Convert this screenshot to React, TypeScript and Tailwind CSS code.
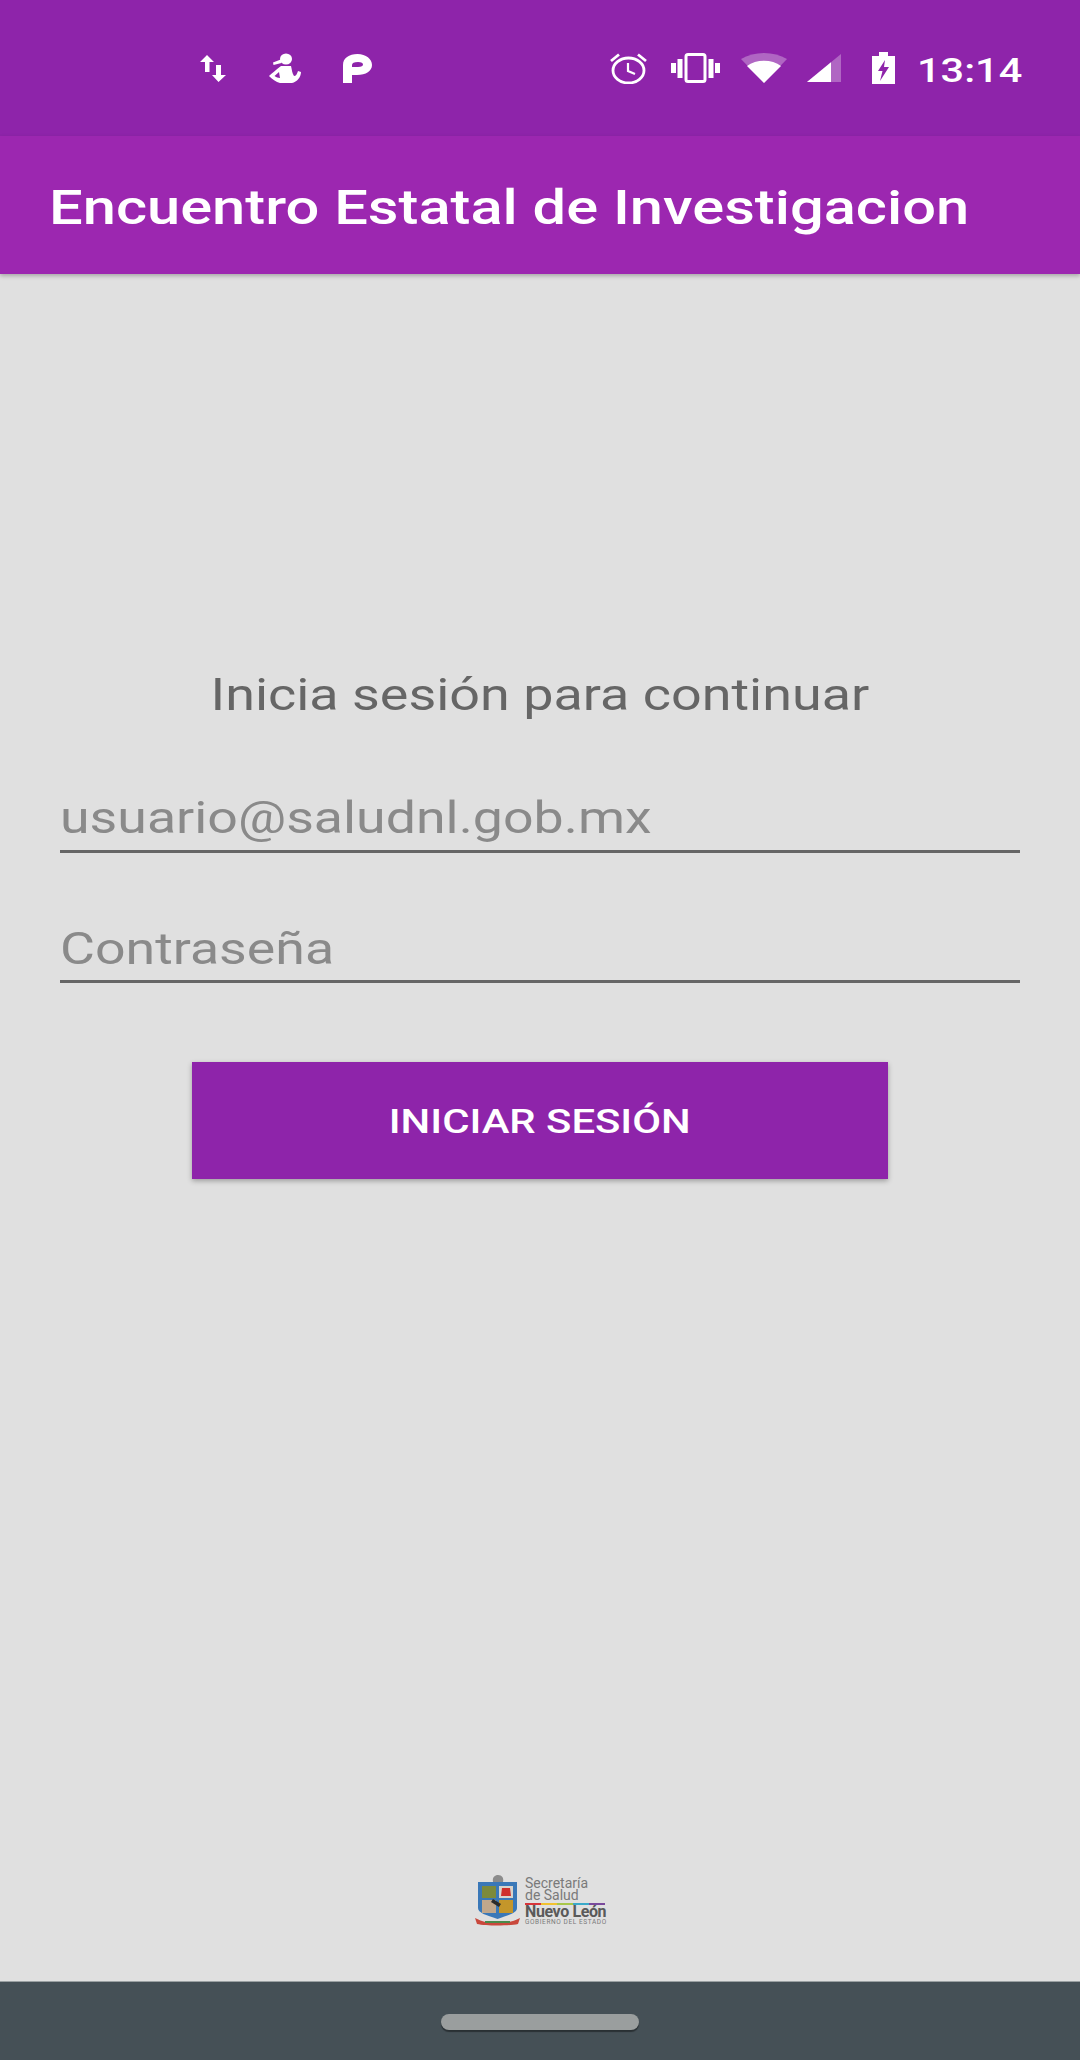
const font = "font-['Roboto',sans-serif]";

function ArrowsIcon() {
  return (
    <svg width="26" height="27" viewBox="0 0 26 27">
      <path d="M7 0L14 7H9.5V17H5V7H0Z M16 10H21V20H26L18.5 27L12 20H16Z" fill="#fff" />
    </svg>
  );
}

function RunnerIcon() {
  return (
    <svg width="33" height="30" viewBox="0 0 33 30">
      <ellipse cx="18" cy="6" rx="6" ry="5.5" fill="#fff" />
      <path d="M14 6L5 9.5L5.5 12L13.5 10Z" fill="#fff" />
      <path
        fillRule="evenodd"
        d="M13 13H23C24 17 24 20 26 23C28 23 29 21 30 18L33 19C33 24 29 29 24 30H12C8 29 4 26 1 23C4 20 8 17 13 13ZM11 19L6.5 23C8 24 10 25 12 25Z"
        fill="#fff"
      />
    </svg>
  );
}

function ParkIcon() {
  return (
    <svg width="29" height="29" viewBox="0 0 29 29">
      <path
        fillRule="evenodd"
        d="M0 29V11C0 4 6 0 14.5 0C23 0 29 5 29 11C29 17 23 21 14 21H9V29ZM9 13H15C18.5 13 20 12 20 10.5C20 9 18.5 8 15 8C11 8 9 9 9 11Z"
        fill="#fff"
      />
    </svg>
  );
}

function AlarmIcon() {
  return (
    <svg width="37" height="31" viewBox="0 0 37 31" fill="none" stroke="#fff">
      <ellipse cx="18.5" cy="17.5" rx="15.5" ry="12.5" strokeWidth="2.8" />
      <path d="M18 10V18L25 21" strokeWidth="2.2" />
      <path d="M1 8L9 1.5M36 8L28 1.5" strokeWidth="2.8" />
    </svg>
  );
}

function VibrateIcon() {
  return (
    <svg width="49" height="30" viewBox="0 0 49 30" fill="#fff">
      <rect x="0" y="10" width="5" height="10" />
      <rect x="6.5" y="6" width="5" height="19" />
      <rect x="37.5" y="6" width="5" height="19" />
      <rect x="44" y="10" width="5" height="10" />
      <rect x="15" y="1.5" width="19" height="27" rx="2" fill="none" stroke="#fff" strokeWidth="3" />
    </svg>
  );
}

function WifiIcon() {
  return (
    <svg width="46" height="30" viewBox="0 0 46 30">
      <path d="M0 6C13 -2 33 -2 46 6L23 30Z" fill="#fff" fillOpacity="0.3" />
      <path d="M6 13C15 6 31 6 40 13L23 30Z" fill="#fff" />
    </svg>
  );
}

function SignalIcon() {
  return (
    <svg width="34" height="28" viewBox="0 0 34 28">
      <path d="M34 0V28H0Z" fill="#fff" fillOpacity="0.3" />
      <path d="M24 8.2V28H0Z" fill="#fff" />
    </svg>
  );
}

function BatteryIcon() {
  return (
    <svg width="23" height="32" viewBox="0 0 23 32">
      <path fillRule="evenodd" d="M7 0H16V4H23V32H0V4H7ZM13 8L6 19H10.5L8 29L17 15H12Z" fill="#fff" />
    </svg>
  );
}

function NuevoLeonLogo() {
  return (
    <div className="flex items-center gap-[5px]">
      <svg width="45" height="51" viewBox="0 0 45 51">
        <path d="M18 7C17 2 20 0 23 0C27 0 29 3 28 7Z" fill="#8c8c8c" />
        <path d="M3 7H42V33C42 38 34 40 22.5 44C11 40 3 38 3 33Z" fill="#3a78b8" />
        <rect x="7" y="11" width="14" height="12" fill="#7c8a3c" />
        <rect x="24" y="11" width="14" height="12" fill="#d8d4cc" />
        <path d="M27 13L35 13L36 21H26Z" fill="#cf2f2a" />
        <rect x="7" y="25" width="14" height="13" fill="#c0a78c" />
        <rect x="24" y="25" width="14" height="13" fill="#c4962a" />
        <path d="M18 24L26 29L24 32L16 27Z" fill="#2b2b2b" />
        <path d="M0 43C8 47 12 48 22 48C32 48 37 47 45 43L43 49C34 51 11 51 2 49Z" fill="#c9483c" />
        <path d="M10 46H35V48H10Z" fill="#4a8a4a" />
      </svg>
      <div className={`flex w-[80px] flex-col ${font} text-[#7a7a7a]`}>
        <span className="text-[14px] leading-[12px]">Secretaría</span>
        <span className="text-[14px] leading-[13px]">de Salud</span>
        <div className="mt-[1px] flex h-[2px] w-[80px]">
          <div className="flex-1 bg-[#d8343a]" />
          <div className="flex-1 bg-[#f2c230]" />
          <div className="flex-1 bg-[#a8c74a]" />
          <div className="flex-1 bg-[#3aa9c9]" />
          <div className="flex-1 bg-[#7a4a9c]" />
        </div>
        <span className="whitespace-nowrap text-[16px] font-bold leading-[14px] tracking-[-0.4px] text-[#5a5a5a]">
          Nuevo León
        </span>
        <span className="whitespace-nowrap text-[6.5px] leading-[6px] tracking-[0.6px]">GOBIERNO DEL ESTADO</span>
      </div>
    </div>
  );
}

export default function App() {
  return (
    <div className={`flex h-[2060px] w-[1080px] flex-col bg-[#e0e0e0] ${font}`}>
      <div className="flex h-[136px] shrink-0 items-center bg-[#8e24aa] pl-[200px] pr-[58px]">
        <ArrowsIcon />
        <div className="ml-[42px]"><RunnerIcon /></div>
        <div className="ml-[42px]"><ParkIcon /></div>
        <div className="ml-auto"><AlarmIcon /></div>
        <div className="ml-[24px]"><VibrateIcon /></div>
        <div className="ml-[21px]"><WifiIcon /></div>
        <div className="ml-[20px]"><SignalIcon /></div>
        <div className="ml-[31px]"><BatteryIcon /></div>
        <span className="ml-[22px] inline-block w-[105px] origin-left scale-x-[1.22] pt-[4px] text-[34px] font-medium text-white">
          13:14
        </span>
      </div>

      <header className="z-10 flex h-[138px] shrink-0 items-center bg-[#9c27b0] pl-[49px] pt-[5px] shadow-[0_2px_4px_rgba(0,0,0,0.25)]">
        <h1 className="origin-left scale-x-[1.217] whitespace-nowrap text-[49px] font-medium text-white">
          Encuentro Estatal de Investigacion
        </h1>
      </header>

      <main className="flex flex-1 flex-col items-center px-[60px] pt-[389px]">
        <p className="scale-x-[1.225] whitespace-nowrap text-[44px] leading-[64px] text-[#666666]">
          Inicia sesión para continuar
        </p>

        <div className="mt-[52px] h-[74px] w-full border-b-[3px] border-[#666666]">
          <input
            placeholder="usuario@saludnl.gob.mx"
            className="h-full w-[787px] origin-left scale-x-[1.22] bg-transparent pt-[6px] text-[44px] outline-none placeholder:text-[#8a8a8a]"
          />
        </div>
        <div className="mt-[56px] h-[74px] w-full border-b-[3px] border-[#666666]">
          <input
            placeholder="Contraseña"
            className="h-full w-[787px] origin-left scale-x-[1.22] bg-transparent pt-[8px] text-[44px] outline-none placeholder:text-[#8a8a8a]"
          />
        </div>

        <button className="mt-[79px] h-[117px] w-[696px] bg-[#8e24aa] pt-[2px] font-medium text-white shadow-[0_2px_5px_rgba(0,0,0,0.3)]">
          <span className="inline-block scale-x-[1.23] text-[34px]">INICIAR SESIÓN</span>
        </button>

        <div className="mt-auto pb-[55px]">
          <NuevoLeonLogo />
        </div>
      </main>

      <nav className="flex h-[79px] shrink-0 items-center justify-center border-t border-[#9aa0a2] bg-[#455056] pt-[2px]">
        <div className="h-[16px] w-[198px] rounded-full bg-[#9a9e9e] shadow-[0_2px_1px_rgba(0,0,0,0.4)]" />
      </nav>
    </div>
  );
}
